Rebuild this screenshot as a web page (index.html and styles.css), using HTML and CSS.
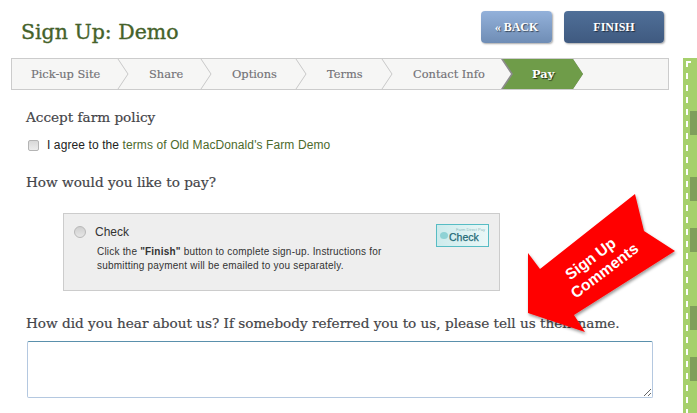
FILE: index.html
```html
<!DOCTYPE html>
<html lang="en">
<head>
<meta charset="utf-8">
<title>Sign Up: Demo</title>
<link rel="stylesheet" href="styles.css">
</head>
<body>
<div class="page">
  <main class="main">
    <header class="header">
      <h1 class="title">Sign Up: Demo</h1>
      <div class="actions">
        <a class="btn btn-back">« BACK</a>
        <a class="btn btn-finish">FINISH</a>
      </div>
    </header>

    <nav class="steps">
      <div class="step s1">Pick-up Site<svg class="chev" viewBox="0 0 12 30"><path d="M1 0 L11 15 L1 30" /></svg></div>
      <div class="step s2">Share<svg class="chev" viewBox="0 0 12 30"><path d="M1 0 L11 15 L1 30" /></svg></div>
      <div class="step s3">Options<svg class="chev" viewBox="0 0 12 30"><path d="M1 0 L11 15 L1 30" /></svg></div>
      <div class="step s4">Terms<svg class="chev" viewBox="0 0 12 30"><path d="M1 0 L11 15 L1 30" /></svg></div>
      <div class="step s5">Contact Info</div>
      <div class="step s6"><span class="s6-label">Pay</span></div>
    </nav>

    <section class="content">
      <h2 class="heading h-policy">Accept farm policy</h2>
      <label class="agree">
        <input class="agree-box" type="checkbox">
        <span>I agree to the <a class="terms">terms of Old MacDonald's Farm Demo</a></span>
      </label>

      <h2 class="heading h-pay">How would you like to pay?</h2>
      <div class="pay-box">
        <div class="pay-text">
          <label class="pay-label"><input class="pay-radio" type="radio"><span>Check</span></label>
          <p class="pay-desc">Click the <b>"Finish"</b> button to complete sign-up. Instructions for<br>submitting payment will be emailed to you separately.</p>
        </div>
        <div class="logo"><span class="logo-small">Farm Direct Pay</span><span class="logo-dot"></span><span class="logo-word">Check</span></div>
      </div>

      <h2 class="heading h-hear">How did you hear about us? If somebody referred you to us, please tell us their name.</h2>
      <textarea class="comments"></textarea>
    </section>
  </main>

  <aside class="side">
    <div class="patch p1"></div>
    <div class="patch p2"></div>
    <div class="patch p3"></div>
    <div class="patch p4"></div>
    <div class="patch p5"></div>
  </aside>

  <svg class="arrow" viewBox="0 0 697 413" width="697" height="413">
    <defs>
      <filter id="arrowShadow" x="-20%" y="-20%" width="140%" height="140%">
        <feDropShadow dx="1" dy="2" stdDeviation="1.5" flood-color="#000" flood-opacity="0.4"/>
      </filter>
    </defs>
    <polygon points="585,332 528,313 528,253 540,269 635,194 644,231 675,251 574,315" fill="#ff0000" filter="url(#arrowShadow)"/>
    <g class="arrow-text" transform="rotate(-37 597 264)">
      <text x="595" y="261" text-anchor="middle">Sign Up</text>
      <text x="599" y="279" text-anchor="middle">Comments</text>
    </g>
  </svg>
</div>
</body>
</html>
```

FILE: styles.css
```css
html, body {
  margin: 0;
  padding: 0;
  background: #fff;
}
body {
  width: 697px;
  height: 413px;
  overflow: hidden;
  font-family: "Liberation Sans", Arial, sans-serif;
}
.page {
  position: relative;
  display: flex;
  width: 697px;
  height: 413px;
  overflow: hidden;
}
.main {
  width: 670px;
  padding-left: 11px;
  box-sizing: border-box;
  flex: none;
}
.header {
  display: flex;
  justify-content: space-between;
  align-items: flex-start;
  height: 58px;
}
.title {
  margin: 19px 0 0 10px;
  font: 400 20.5px/27px "DejaVu Serif", serif;
  color: #45622a;
  -webkit-text-stroke: .35px #45622a;
}
.actions {
  display: flex;
  gap: 12px;
  margin: 11px 6px 0 0;
}
.btn {
  display: flex;
  align-items: center;
  justify-content: center;
  height: 32px;
  border-radius: 4px;
  color: #fff;
  font: 700 12px/1 "Liberation Serif", serif;
  text-shadow: 1px 1px 1px rgba(0, 0, 0, .55);
  box-shadow: 1px 1px 2px rgba(0, 0, 0, .35);
}
.btn-back {
  width: 71px;
  background: linear-gradient(#93b1da, #6f8db5);
}
.btn-finish {
  width: 100px;
  background: linear-gradient(#4f6f98, #3f5a80);
}

.steps {
  display: flex;
  width: 658px;
  height: 32px;
  box-sizing: border-box;
  border: 1px solid #ccc;
  background: #f6f6f5;
  font: 400 11.4px/30px "DejaVu Serif", serif;
  color: #727175;
  -webkit-text-stroke: .15px #727175;
}
.step {
  position: relative;
  flex: none;
  box-sizing: border-box;
  white-space: nowrap;
}
.chev {
  position: absolute;
  top: 0;
  right: -11px;
  width: 12px;
  height: 30px;
  z-index: 1;
}
.chev path {
  fill: none;
  stroke: #c8c8c8;
  stroke-width: 1;
}
.s1 { width: 106px; padding-left: 19px; }
.s2 { width: 83px; padding-left: 31px; }
.s3 { width: 95px; padding-left: 31px; }
.s4 { width: 86px; padding-left: 31px; }
.s5 { width: 119px; padding-left: 31px; }
.s6 {
  width: 83px;
  padding-left: 31px;
}
.s6::before,
.s6::after {
  content: "";
  position: absolute;
  top: 0;
  bottom: 0;
  left: 0;
  width: 83px;
  clip-path: polygon(0 0, 72px 0, 82px 50%, 72px 100%, 0 100%, 10px 50%);
}
.s6::before {
  background: #8b8b8b;
}
.s6::after {
  left: 2px;
  width: 81px;
  background: #6f9c49;
  clip-path: polygon(0 0, 70px 0, 80px 50%, 70px 100%, 0 100%, 10px 50%);
}
.s6-label {
  position: relative;
  z-index: 1;
  color: #fff;
  font-weight: 700;
  -webkit-text-stroke: 0;
  text-shadow: 1px 1px 1px rgba(0, 0, 0, .7);
}

.content {
  padding: 0 0 0 15px;
}
.heading {
  margin: 0;
  font: 400 13.6px/18px "DejaVu Serif", serif;
  color: #444448;
  -webkit-text-stroke: .2px #444448;
}
.h-policy { padding-top: 18px; }
.agree {
  display: flex;
  align-items: center;
  gap: 8px;
  margin: 11px 0 0 2px;
  height: 16px;
  font-size: 12px;
  letter-spacing: .1px;
  color: #222;
}
.agree-box {
  appearance: none;
  width: 11px;
  height: 11px;
  margin: 0;
  border: 1px solid #b4b4b4;
  border-radius: 2px;
  background: linear-gradient(#d8d8d8, #ececec);
}
.terms { color: #4c6a2c; }
.h-pay { margin-top: 20px; }
.pay-box {
  display: flex;
  justify-content: space-between;
  box-sizing: border-box;
  width: 437px;
  height: 78px;
  margin: 22px 0 0 37px;
  padding: 10px 10px 0 10px;
  border: 1px solid #ccc;
  background: #eee;
}
.pay-label {
  display: flex;
  align-items: center;
  gap: 9px;
  height: 16px;
  font-size: 12px;
  color: #333;
}
.pay-radio {
  appearance: none;
  width: 12px;
  height: 12px;
  margin: 0;
  border: 1px solid #b8b8b8;
  border-radius: 50%;
  background: linear-gradient(#cfcfcf, #e6e6e6);
}
.pay-desc {
  margin: 5px 0 0 23px;
  font-size: 10px;
  line-height: 14px;
  letter-spacing: .2px;
  color: #333;
}
.logo {
  position: relative;
  box-sizing: border-box;
  width: 53px;
  height: 23px;
  border: 1px solid #57bcc4;
  background: linear-gradient(90deg, #cdebec, #eaf7f7);
  overflow: hidden;
  color: #1f6a76;
}
.logo-small {
  position: absolute;
  top: 2px;
  right: 3px;
  font-size: 4px;
  line-height: 5px;
  color: #8fbcc0;
  white-space: nowrap;
}
.logo-dot {
  position: absolute;
  left: 3px;
  top: 7px;
  width: 8px;
  height: 7px;
  border-radius: 50%;
  background: #8fd2d5;
}
.logo-word {
  position: absolute;
  left: 12px;
  top: 6px;
  font-size: 10.5px;
  line-height: 13px;
  -webkit-text-stroke: .25px #1f6a76;
}
.h-hear { margin-top: 23px; }
.comments {
  display: block;
  box-sizing: border-box;
  width: 626px;
  height: 57px;
  margin: 9px 0 0 1px;
  border: 1px solid #b4c8e0;
  border-top-color: #5a90ac;
  border-radius: 2px;
  background: #fff;
  outline: none;
}

.side {
  position: relative;
  flex: none;
  width: 14px;
  height: 355px;
  margin: 58px 0 0 13px;
  background-color: #a6d06c;
  background-image:
    linear-gradient(#fff, #fff),
    repeating-linear-gradient(180deg, #fff 0 6px, transparent 6px 12px);
  background-size: 5px 2px, 2px 100%;
  background-position: 3px 3px, 3px 3px;
  background-repeat: no-repeat;
}
.patch {
  position: absolute;
  left: 7px;
  width: 7px;
  height: 24px;
  background: #7f9f5b;
}
.p1 { top: 53px; }
.p2 { top: 119px; }
.p3 { top: 170px; }
.p4 { top: 248px; }
.p5 { top: 299px; }

.arrow {
  position: absolute;
  left: 0;
  top: 0;
  pointer-events: none;
}
.arrow-text text {
  font: 700 15.5px "Liberation Sans", Arial, sans-serif;
  fill: #fff;
}
```
